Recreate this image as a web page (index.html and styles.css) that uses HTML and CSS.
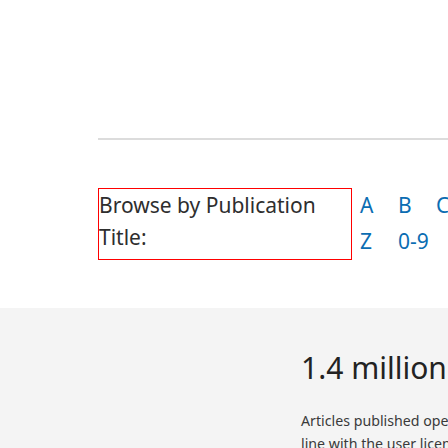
FILE: index.html
```html
<!DOCTYPE html>
<html>
<head>
<meta charset="utf-8">
<link rel="stylesheet" href="styles.css">
</head>
<body>
<div class="page">
  <div class="header-space"></div>
  <div class="rule"></div>
  <div class="browse">
    <div class="browse-box">Browse by Publication<br>Title:</div>
    <div class="letters">
      <a>A</a><a>B</a><a>C</a><a>D</a><a>E</a><a>F</a><a>G</a><a>H</a><a>I</a><a>J</a><a>K</a><a>L</a><a>M</a><a>N</a><a>O</a><a>P</a><a>Q</a><a>R</a><a>S</a><a>T</a><a>U</a><a>V</a><a>W</a><a>X</a><a>Y</a><a>Z</a><a>0-9</a>
    </div>
  </div>
  <div class="band">
    <div class="band-inner">
      <h2 class="stat">1.4 million open access articles</h2>
      <p class="desc">Articles published open access are peer-reviewed and made freely available for everyone to read, download and reuse in<br>line with the user licence displayed on the article.</p>
    </div>
  </div>
</div>
</body>
</html>
```
FILE: styles.css
```css
html, body {
  margin: 0;
  padding: 0;
  overflow: hidden;
  background: #fff;
}
.page {
  font-family: "Noto Sans", "Open Sans", sans-serif;
  color: #2e2e2e;
}
.header-space {
  height: 138px;
}
.rule {
  margin-left: 98px;
  border-top: 2px solid #dcdcdc;
}
.browse {
  display: flex;
  gap: 8px;
  padding-left: 98px;
  margin-top: 48px;
  width: 1300px;
}
.browse-box {
  flex: none;
  box-sizing: border-box;
  width: 254px;
  border: 1px solid #ff0000;
  font-size: 21px;
  line-height: 32px;
  padding-bottom: 6px;
}
.letters {
  display: grid;
  grid-template-columns: repeat(25, 38px);
  font-size: 21px;
  line-height: 32px;
  color: #0b6db2;
  padding-top: 1px;
}
.band {
  margin-top: 48px;
  background: #f4f4f4;
  height: 200px;
  padding-left: 301px;
  width: 1200px;
}
.band-inner {
  padding-top: 40px;
  white-space: nowrap;
}
.stat {
  margin: 0;
  font-weight: 400;
  font-size: 30px;
  line-height: 40px;
  color: #222;
}
.desc {
  margin: 21px 0 0;
  font-size: 14.2px;
  line-height: 23px;
  color: #3a3a3a;
}
```
